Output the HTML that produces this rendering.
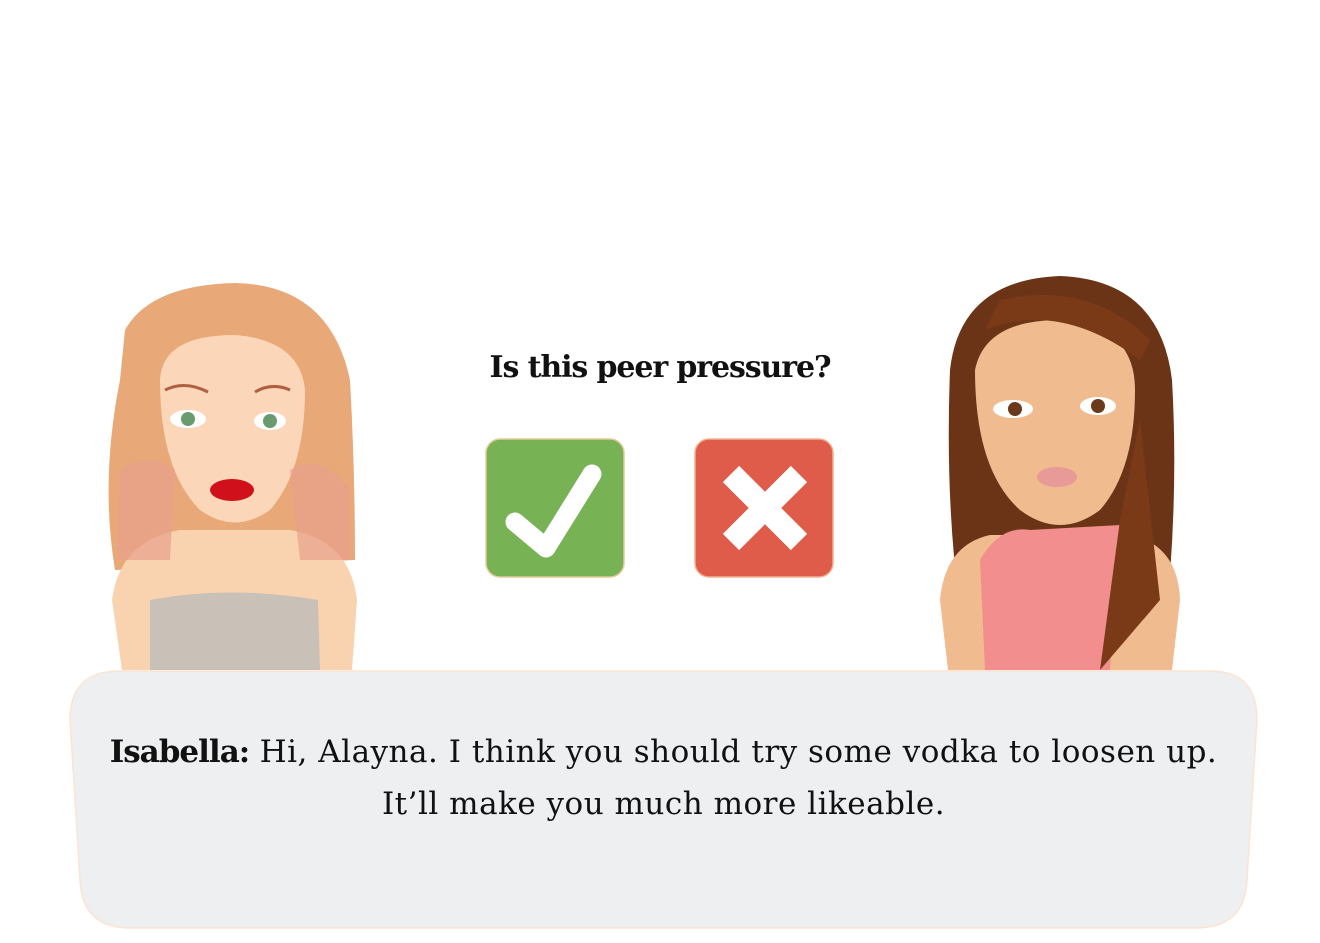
<!DOCTYPE html>
<html><head><meta charset="utf-8"><style>
body{margin:0;width:1320px;height:943px;background:#fff;overflow:hidden;position:relative;font-family:"DejaVu Serif","Liberation Serif",serif}
svg{position:absolute;left:0;top:0}
.q{position:absolute;left:400px;top:350px;width:520px;text-align:center;font-size:30px;font-weight:bold;color:#111;letter-spacing:-1.1px}
.d{position:absolute;left:70px;top:726px;width:1187px;text-align:center;font-size:31px;line-height:52px;color:#111;letter-spacing:0.5px}
</style></head><body>
<svg width="1320" height="943" viewBox="0 0 1320 943">
<path d="M125 330 Q150 285 235 283 Q330 285 350 380 Q355 470 355 560 L115 570 Q100 480 120 380 Z" fill="#e8a878"/>
<path d="M112 600 Q120 540 180 530 L290 530 Q350 540 357 600 L352 670 L122 670 Z" fill="#f9d3b0"/>
<path d="M150 600 Q230 585 318 600 L320 670 L150 670 Z" fill="#c9c0b8"/>
<path d="M160 380 Q162 335 235 335 Q300 340 305 390 Q305 470 270 510 Q235 535 200 510 Q160 470 160 380 Z" fill="#fcd6b8"/>
<path d="M120 470 Q150 450 175 470 L170 560 L118 560 Z M290 470 Q320 450 350 490 L350 560 L300 560 Z" fill="#e8a08a" opacity=".7"/>
<ellipse cx="188" cy="419" rx="18" ry="9" fill="#fff"/><circle cx="188" cy="419" r="7" fill="#6a9a70"/>
<ellipse cx="270" cy="421" rx="16" ry="9" fill="#fff"/><circle cx="270" cy="421" r="7" fill="#6a9a70"/>
<path d="M165 390 Q185 380 208 392 M255 392 Q272 382 290 390" stroke="#b06040" stroke-width="3" fill="none"/>
<ellipse cx="232" cy="490" rx="22" ry="11" fill="#d0101a"/>
<path d="M950 370 Q960 280 1060 276 Q1160 280 1172 380 Q1180 520 1160 670 L1100 670 Q1120 560 1130 540 L990 540 Q995 580 960 610 Q945 500 950 370 Z" fill="#6b3416"/>
<path d="M940 600 Q945 545 990 535 L1130 535 Q1178 545 1180 600 L1172 670 L948 670 Z" fill="#f0bb8e"/>
<path d="M980 560 Q1000 525 1030 530 L1120 525 L1110 670 L985 670 Z" fill="#f28e8e"/>
<path d="M975 370 Q985 320 1060 320 Q1135 325 1135 390 Q1135 470 1100 510 Q1060 540 1020 510 Q975 470 975 370 Z" fill="#f0bb8e"/>
<path d="M985 330 Q1060 300 1140 360 L1150 340 Q1090 280 1000 300 Z" fill="#7a3a18"/>
<path d="M1120 520 L1140 420 L1160 600 L1100 670 Z" fill="#7a3a18"/>
<ellipse cx="1013" cy="409" rx="20" ry="9" fill="#fff"/><circle cx="1015" cy="409" r="7" fill="#6a3a1a"/>
<ellipse cx="1098" cy="406" rx="18" ry="9" fill="#fff"/><circle cx="1098" cy="406" r="7" fill="#6a3a1a"/>
<ellipse cx="1057" cy="477" rx="20" ry="10" fill="#e89a98"/>
<rect x="486" y="439" width="138" height="138" rx="14" fill="#77b255" stroke="#e8c89a" stroke-width="1.5"/>
<path d="M515 522 L546 548 L592 474" stroke="#fff" stroke-width="19" stroke-linecap="round" stroke-linejoin="round" fill="none"/>
<rect x="695" y="439" width="138" height="138" rx="14" fill="#e05c4a" stroke="#f0b090" stroke-width="1.5"/>
<path d="M731 474 L799 542 M799 474 L731 542" stroke="#fff" stroke-width="23" fill="none"/>
<path d="M120 671 L1210 671 Q1257 671 1257 720 L1247 880 Q1245 928 1195 928 L130 928 Q82 928 80 880 L70 720 Q70 671 120 671 Z" fill="#eeeff1" stroke="#fbe4d2" stroke-width="1.5"/>
</svg>
<div class="q">Is this peer pressure?</div>
<div class="d"><b style="letter-spacing:-1px">Isabella:</b> Hi, Alayna. I think you should try some vodka to loosen up.<br>It’ll make you much more likeable.</div>
</body></html>
